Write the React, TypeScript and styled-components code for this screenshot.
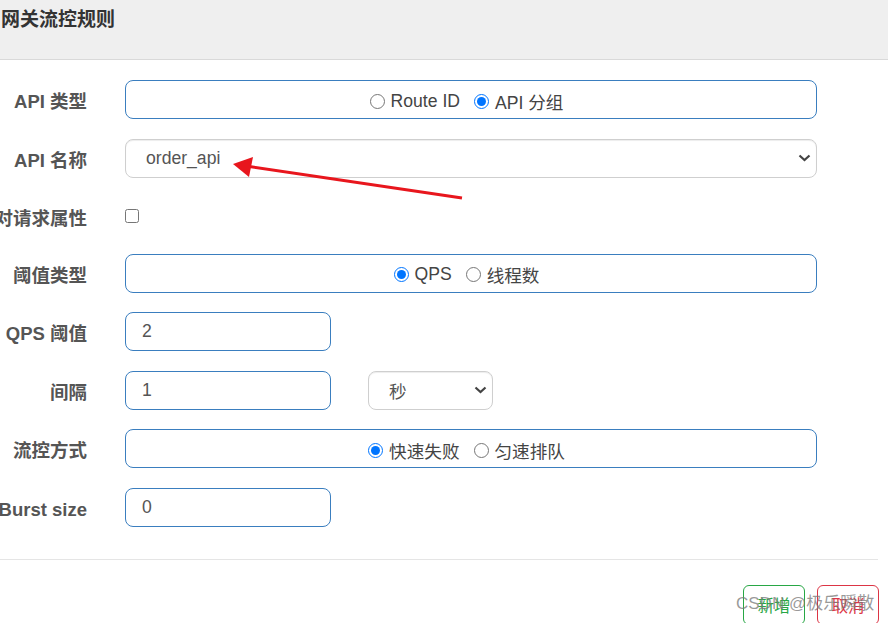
import styled, { createGlobalStyle } from "styled-components";

const GlobalStyle = createGlobalStyle`
  body {
    margin: 0;
    background: #fff;
    font-family: "Liberation Sans", "Noto Sans CJK SC", sans-serif;
    overflow: hidden;
  }
`;

const Page = styled.div`
  position: relative;
  width: 888px;
  height: 623px;
  overflow: hidden;
`;

const Header = styled.div`
  box-sizing: border-box;
  height: 60px;
  padding: 9px 0 0 1px;
  background: #efefef;
  border-bottom: 1px solid #d9d9d9;
`;

const Title = styled.h4`
  margin: 0;
  font-size: 19px;
  line-height: 22px;
  font-weight: 700;
  color: #333;
`;

const Form = styled.div`
  display: flex;
  flex-direction: column;
  gap: 19.5px;
  padding-top: 20px;
`;

const Row = styled.div<{ $h?: number }>`
  display: flex;
  align-items: center;
  height: ${(p) => p.$h ?? 39}px;
`;

const Label = styled.div`
  display: flex;
  justify-content: flex-end;
  align-self: flex-start;
  width: 87px;
  margin-right: 38px;
  padding-top: 9px;
  line-height: 26px;
  font-size: 18.5px;
  font-weight: 700;
  color: #555;
  white-space: nowrap;
`;

const TextInput = styled.input<{ $w: number }>`
  box-sizing: border-box;
  width: ${(p) => p.$w}px;
  height: 39px;
  padding: 0 16px;
  border: 1px solid #3a7ebf;
  border-radius: 8px;
  font-family: "Liberation Sans", "Noto Sans CJK SC", sans-serif;
  font-size: 17.6px;
  color: #555;
  outline: none;
`;

const RadioBox = styled.div`
  box-sizing: border-box;
  display: flex;
  justify-content: center;
  align-items: center;
  gap: 14px;
  width: 692px;
  height: 39px;
  padding: 3px 9px 0 0;
  border: 1px solid #3a7ebf;
  border-radius: 8px;
  font-size: 17.6px;
  color: #444;
`;

const RadioLabel = styled.label`
  display: flex;
  align-items: center;
  gap: 6px;
  white-space: nowrap;
`;

const Radio = styled.input`
  width: 15px;
  height: 15px;
  margin: 0;
  accent-color: #0075ff;
`;

const Check = styled.input`
  width: 14px;
  height: 14px;
  margin: 0;
`;

const SelectBox = styled.div<{ $w: number; $ml?: number }>`
  box-sizing: border-box;
  display: flex;
  align-items: center;
  justify-content: space-between;
  width: ${(p) => p.$w}px;
  height: 39px;
  margin-left: ${(p) => p.$ml ?? 0}px;
  padding: 0 5px 0 20px;
  border: 1px solid #cfcfcf;
  border-radius: 8px;
  box-shadow: inset 0 1px 1px rgba(0, 0, 0, 0.075);
  font-size: 17.6px;
  color: #555;
`;

const Footer = styled.div`
  display: flex;
  justify-content: flex-end;
  gap: 12px;
  margin: 32px 10px 0 0;
  padding: 25px 0 0 0;
  border-top: 1px solid #e5e5e5;
`;

const Button = styled.button<{ $color: string }>`
  box-sizing: border-box;
  width: 62px;
  height: 40px;
  margin-right: ${(p) => (p.$color === "#dc3545" ? "-1px" : "0")};
  border: 1px solid ${(p) => p.$color};
  border-radius: 6px;
  background: #fff;
  color: ${(p) => p.$color};
  font-family: "Liberation Sans", "Noto Sans CJK SC", sans-serif;
  font-size: 16.5px;
  padding: 0;
`;

const Watermark = styled.div`
  position: absolute;
  left: 736px;
  top: 593px;
  font-size: 17px;
  line-height: 22px;
  color: rgba(120, 120, 120, 0.75);
  white-space: nowrap;
  pointer-events: none;
`;

const ArrowLayer = styled.svg`
  position: absolute;
  left: 0;
  top: 0;
  pointer-events: none;
`;

function Chevron() {
  return (
    <svg width="13" height="8" viewBox="0 0 13 8">
      <path d="M1.5 1.5 L6.5 6 L11.5 1.5" fill="none" stroke="#444" strokeWidth="2.2" />
    </svg>
  );
}

export default function App() {
  return (
    <Page>
      <GlobalStyle />
      <Header>
        <Title>网关流控规则</Title>
      </Header>
      <Form>
        <Row>
          <Label>API 类型</Label>
          <RadioBox>
            <RadioLabel>
              <Radio type="radio" name="apiType" />
              Route ID
            </RadioLabel>
            <RadioLabel>
              <Radio type="radio" name="apiType" defaultChecked />
              API 分组
            </RadioLabel>
          </RadioBox>
        </Row>
        <Row>
          <Label>API 名称</Label>
          <SelectBox $w={692}>
            <span>order_api</span>
            <Chevron />
          </SelectBox>
        </Row>
        <Row $h={37}>
          <Label>针对请求属性</Label>
          <Check type="checkbox" />
        </Row>
        <Row>
          <Label>阈值类型</Label>
          <RadioBox>
            <RadioLabel>
              <Radio type="radio" name="grade" defaultChecked />
              QPS
            </RadioLabel>
            <RadioLabel>
              <Radio type="radio" name="grade" />
              线程数
            </RadioLabel>
          </RadioBox>
        </Row>
        <Row>
          <Label>QPS 阈值</Label>
          <TextInput $w={206} defaultValue="2" />
        </Row>
        <Row>
          <Label>间隔</Label>
          <TextInput $w={206} defaultValue="1" />
          <SelectBox $w={125} $ml={37}>
            <span>秒</span>
            <Chevron />
          </SelectBox>
        </Row>
        <Row>
          <Label>流控方式</Label>
          <RadioBox>
            <RadioLabel>
              <Radio type="radio" name="behavior" defaultChecked />
              快速失败
            </RadioLabel>
            <RadioLabel>
              <Radio type="radio" name="behavior" />
              匀速排队
            </RadioLabel>
          </RadioBox>
        </Row>
        <Row>
          <Label>Burst size</Label>
          <TextInput $w={206} defaultValue="0" />
        </Row>
      </Form>
      <Footer>
        <Button $color="#28a745">新增</Button>
        <Button $color="#dc3545">取消</Button>
      </Footer>
      <Watermark>CSDN @极乐瞬散</Watermark>
      <ArrowLayer width="888" height="623">
        <line x1="462" y1="198" x2="246" y2="166" stroke="#e8161d" strokeWidth="3" />
        <polygon points="233,164 253,157 249,177" fill="#e8161d" />
      </ArrowLayer>
    </Page>
  );
}
